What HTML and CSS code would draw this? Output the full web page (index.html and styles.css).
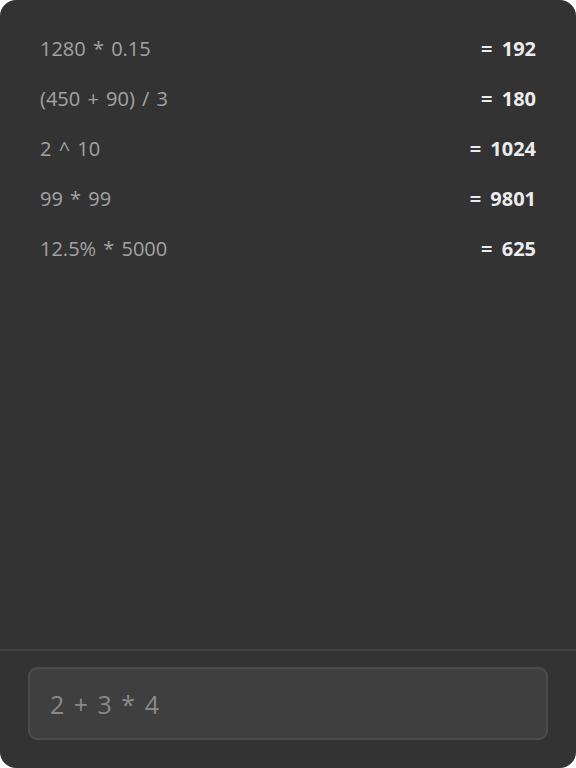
FILE: index.html
```html
<!DOCTYPE html>
<html>
<head>
<meta charset="utf-8">
<link rel="stylesheet" href="styles.css">
</head>
<body>
<div class="calc">
  <div class="history">
    <div class="row"><span class="expr">1280 * 0.15</span><span class="res">= 192</span></div>
    <div class="row"><span class="expr">(450 + 90) / 3</span><span class="res">= 180</span></div>
    <div class="row"><span class="expr">2 ^ 10</span><span class="res">= 1024</span></div>
    <div class="row"><span class="expr">99 * 99</span><span class="res">= 9801</span></div>
    <div class="row"><span class="expr">12.5% * 5000</span><span class="res">= 625</span></div>
  </div>
  <div class="footer">
    <input class="entry" type="text" placeholder="2 + 3 * 4">
  </div>
</div>
</body>
</html>
```
FILE: styles.css
```css
html, body {
  margin: 0;
  padding: 0;
  background: #ffffff;
}
body {
  width: 576px;
  height: 768px;
  font-family: "Open Sans", "Noto Sans", sans-serif;
}
.calc {
  width: 576px;
  height: 768px;
  background: #333333;
  border-radius: 16px;
  display: flex;
  flex-direction: column;
  overflow: hidden;
}
.history {
  flex: 1;
  padding: 23px 40px 0 40px;
  display: flex;
  flex-direction: column;
}
.row {
  height: 50px;
  display: flex;
  justify-content: space-between;
  align-items: center;
  font-size: 20px;
  word-spacing: 2px;
}
.expr {
  color: #a3a3a3;
}
.res {
  color: #ececec;
  font-weight: 700;
  word-spacing: 4px;
}
.footer {
  border-top: 2px solid #424242;
  padding: 16px 28px 28px 28px;
}
.entry {
  box-sizing: border-box;
  width: 520px;
  height: 73px;
  background: #3f3f3f;
  border: 2px solid #4b4b4b;
  border-radius: 9px;
  padding: 0 20px;
  font-family: "Open Sans", "Noto Sans", sans-serif;
  font-size: 25px;
  word-spacing: 3px;
  color: #dddddd;
  outline: none;
}
.entry::placeholder {
  color: #8a8a8a;
}
```
